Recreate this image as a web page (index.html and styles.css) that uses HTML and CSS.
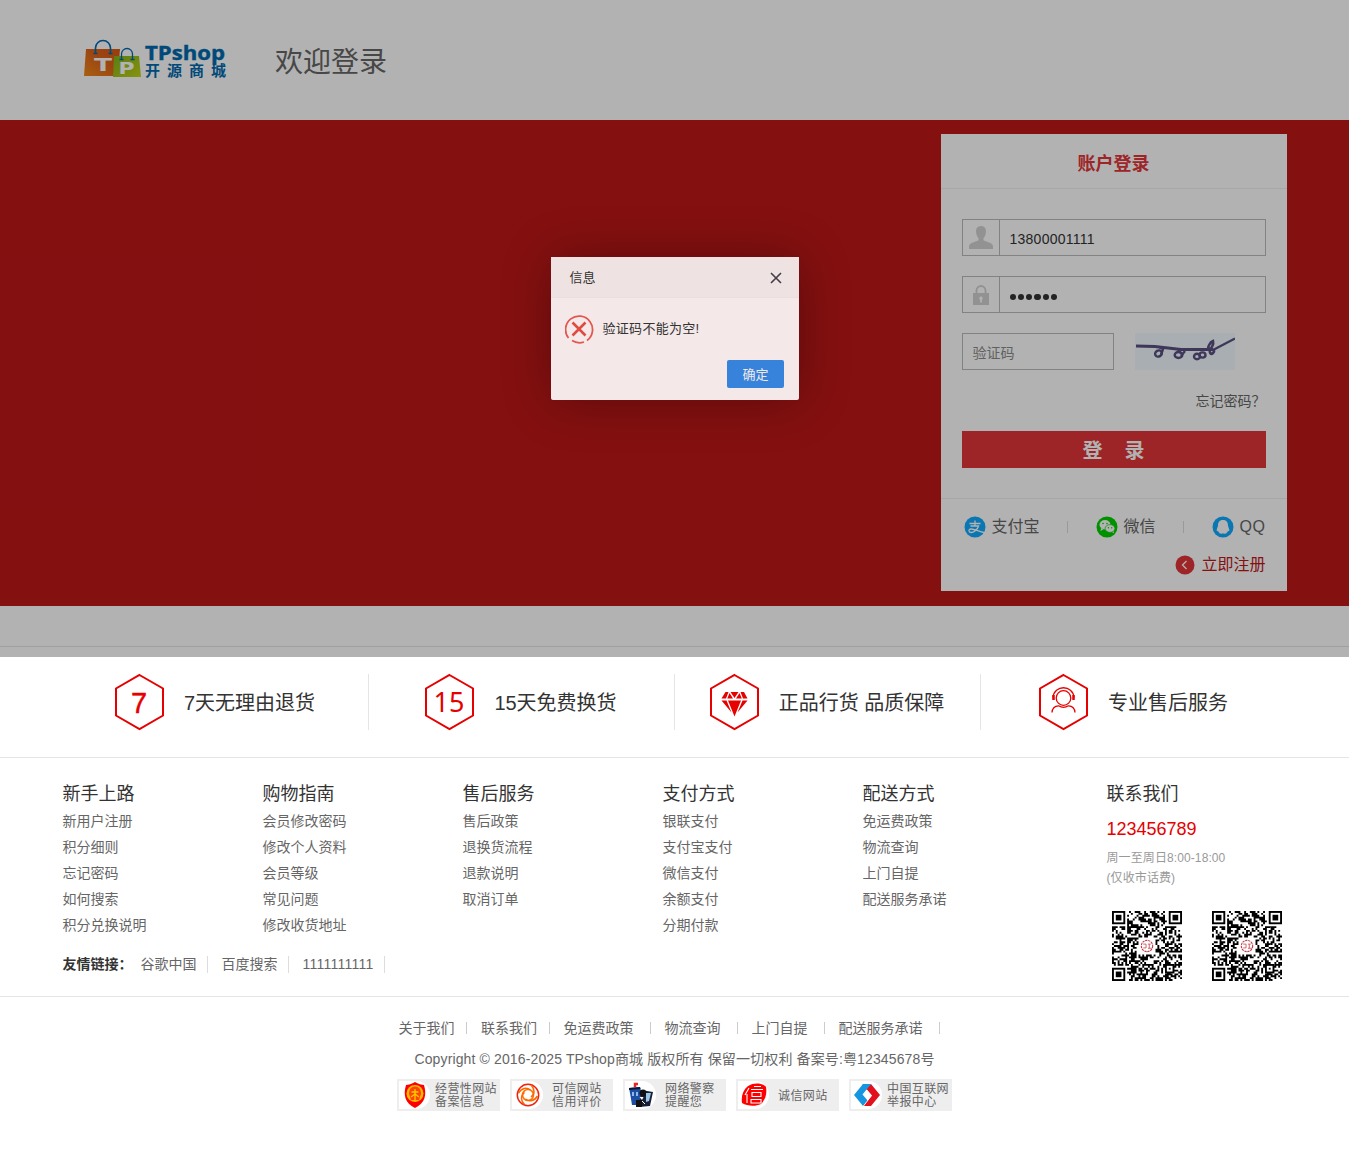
FILE: index.html
```html
<!DOCTYPE html>
<html lang="zh-CN">
<head>
<meta charset="utf-8">
<title>TPshop 登录</title>
<link rel="stylesheet" href="styles.css">
</head>
<body>
<header class="header wrap">
  <svg class="logo" width="144" height="42" viewBox="0 0 144 42">
    <defs>
      <linearGradient id="bagA" x1="1" y1="0" x2="0" y2="1"><stop offset="0" stop-color="#d85a12"/><stop offset=".45" stop-color="#e0641a"/><stop offset="1" stop-color="#f08a18"/></linearGradient>
      <linearGradient id="bagB" x1="0" y1="0" x2="1" y2="1"><stop offset="0" stop-color="#7fb51c"/><stop offset="1" stop-color="#c4d215"/></linearGradient>
    </defs>
    <path d="M2 10H36L34 37H0Z" fill="url(#bagA)"/>
    <path d="M30 17H55L57 38H29Z" fill="url(#bagB)"/>
    <path d="M11.500 14V9a7.500 7.500 0 0 1 15 0v5M9.500 14.500h4M24.500 14.500h4" fill="none" stroke="#0069ae" stroke-width="1.600"/>
    <path d="M37.500 20v-5a5.500 5.500 0 0 1 11 0v5M35.500 20.500h4M46.500 20.500h4" fill="none" stroke="#0069ae" stroke-width="1.300"/>
    <text x="10" y="32" class="logo-letter" font-size="17" textLength="18" lengthAdjust="spacingAndGlyphs">T</text>
    <text x="34.500" y="35" class="logo-letter" font-size="16" textLength="16" lengthAdjust="spacingAndGlyphs">P</text>
    <text x="61" y="21" class="logo-en" textLength="80" lengthAdjust="spacingAndGlyphs">TPshop</text>
    <text x="61" y="37" class="logo-cn" textLength="81">开源商城</text>
  </svg>
  <h1 class="welcome">欢迎登录</h1>
</header>

<main class="banner">
  <div class="wrap banner-in">
    <form class="login">
      <h2 class="login-title">账户登录</h2>
      <div class="login-body">
        <div class="field">
          <span class="field-icon"><svg width="24" height="23" viewBox="0 0 24 23"><path fill="#d2d2d2" d="M12 0c4 0 5.500 3 4.800 7-.2 2.500-1.300 4-2.300 5v2.200c2 1.600 9.500 2 9.500 6.300V23H0v-2.500c0-4.300 7.500-4.700 9.500-6.300V12c-1-1-2.100-2.500-2.300-5C6.500 3 8 0 12 0Z"/></svg></span>
          <span class="field-value">13800001111</span>
        </div>
        <div class="field">
          <span class="field-icon"><svg width="16" height="20" viewBox="0 0 16 20"><path d="M3.500 9V5.500a4.500 4.500 0 0 1 9 0V9" fill="none" stroke="#d2d2d2" stroke-width="1.800"/><path fill="#d2d2d2" d="M0 8h16v12H0z"/><path fill="#fff" d="M8 11.500a1.800 1.800 0 0 1 .9 3.300V17.500H7.100v-2.700A1.800 1.800 0 0 1 8 11.500Z"/></svg></span>
          <span class="field-value dots"><i></i><i></i><i></i><i></i><i></i><i></i></span>
        </div>
        <div class="captcha-row">
          <div class="field captcha"><span class="placeholder">验证码</span></div>
          <svg class="captcha-img" width="100" height="37" viewBox="0 0 100 37">
            <path fill="#f1faff" d="M0 0h100v37H0z"/>
            <g fill="none" stroke="#595080">
              <path stroke-width="2.800" d="M1 13 20 13.500 46 16.500H78"/>
              <path stroke-width="2.300" d="M78 17 100 5.500"/>
              <ellipse stroke-width="2.400" cx="23.500" cy="20.500" rx="3.500" ry="3" transform="rotate(-30 23.500 20.500)"/>
              <path stroke-width="2.400" d="M24 14l4 2-2 6"/>
              <ellipse stroke-width="2.400" cx="43.500" cy="22" rx="3.800" ry="3"/>
              <path stroke-width="2.400" d="M43 17l5 5M50 18l-4 5"/>
              <ellipse stroke-width="2.400" cx="62" cy="23.500" rx="3" ry="2.800"/><ellipse stroke-width="2.400" cx="67.500" cy="22" rx="3" ry="2.600"/>
              <path stroke-width="2.600" d="M78 8c-3 1-6 7-4 8s5-5 4-8ZM75 17c-1 3 1 5 3 3s1-4-3-3"/>
            </g>
          </svg>
        </div>
        <a class="forgot">忘记密码？</a>
        <button type="button" class="submit">登&nbsp;&nbsp;&nbsp;&nbsp;录</button>
      </div>
      <div class="login-foot">
        <div class="social">
          <a class="social-item"><svg width="22" height="22" viewBox="0 0 22 22"><circle cx="11" cy="11" r="10.500" fill="#11abff"/><path d="M5.500 7.500h11M11 4.500v6M6.500 10h8c-1 4-5 6.500-7.500 6.500s-3-3.300 0-3.500 8 2.500 13 3.500" fill="none" stroke="#fff" stroke-width="1.300"/></svg>支付宝</a>
          <i class="bar"></i>
          <a class="social-item"><svg width="22" height="22" viewBox="0 0 22 22"><circle cx="11" cy="11" r="10.500" fill="#00d000"/><ellipse cx="9" cy="8.800" rx="5.500" ry="4.700" fill="#fff"/><path fill="#fff" d="m5 12-.5 3 3-1.800zM17 14l1.200 3.200-3.500-1.700z"/><ellipse cx="14" cy="12.500" rx="4.900" ry="3.900" fill="#fff" stroke="#00d000" stroke-width=".7"/><g fill="#00d000"><circle cx="7" cy="7.500" r=".8"/><circle cx="11" cy="7.500" r=".8"/><circle cx="12.400" cy="11.700" r=".7"/><circle cx="15.700" cy="11.700" r=".7"/></g></svg>微信</a>
          <i class="bar"></i>
          <a class="social-item qq"><svg width="22" height="22" viewBox="0 0 22 22"><circle cx="11" cy="11" r="10.500" fill="#11abff"/><path fill="#fff" d="M11 4c3.800 0 5 2.500 5 5.500 0 1.300 1.300 3 1.300 4.700 0 1.300-.7 1.300-1.300.6-.3 1-.7 1.400-1.300 1.800.6.900-.7 1.200-3.700 1-3 .2-4.300-.1-3.700-1-.6-.4-1-.8-1.300-1.800-.6.700-1.300.7-1.300-.6 0-1.700 1.300-3.400 1.300-4.700 0-3 1.200-5.500 5-5.500Z"/></svg>QQ</a>
        </div>
        <a class="register"><svg width="20" height="20" viewBox="0 0 20 20"><circle cx="10" cy="10" r="9.500" fill="#e33538"/><path d="m11.500 6-4 4 4 4" fill="none" stroke="#fff" stroke-width="1.300"/></svg>立即注册</a>
      </div>
    </form>
  </div>
</main>

<section class="services">
  <div class="wrap services-in">
    <div class="service"><svg class="hex" width="50" height="58" viewBox="0 0 50 58"><path d="M24.500 2 48 15.500v27L24.500 56 1 42.500v-27Z"/><text x="24" y="40" class="hex-num">7</text></svg><span>7天无理由退货</span></div>
    <div class="service"><svg class="hex" width="50" height="58" viewBox="0 0 50 58"><path d="M24.500 2 48 15.500v27L24.500 56 1 42.500v-27Z"/><text x="24" y="39" class="hex-num noto">15</text></svg><span>15天免费换货</span></div>
    <div class="service"><svg class="hex" width="50" height="58" viewBox="0 0 50 58"><path d="M24.500 2 48 15.500v27L24.500 56 1 42.500v-27Z"/><path class="solid" d="M15.500 19h3L16 25.500h-4.500zM20.500 19h8l-4 6zM30.500 19H34l3.500 6.500H33zM19.500 20l3.500 5.500H17.300zM29.500 20l2.300 5.500H26zM11.500 27.500h5l5 12zM18 27.500h13L24.500 43.500zM32.500 27.500h5l-10 12z"/></svg><span>正品行货 品质保障</span></div>
    <div class="service"><svg class="hex" width="50" height="58" viewBox="0 0 50 58"><path d="M24.500 2 48 15.500v27L24.500 56 1 42.500v-27Z"/><g class="thin"><circle cx="24.500" cy="25" r="7.300"/><path d="M14 24.500c1-13 20-13 21 0M13 39.500c.3-5 3-6.500 6.500-6.700 3.500 2.200 6.500 2.200 10 0 3.500.2 6.200 1.700 6.500 6.700"/><path stroke-width="2.500" d="M14.500 22v5M34.500 22v5"/></g></svg><span>专业售后服务</span></div>
  </div>
</section>

<section class="help">
  <div class="wrap help-in">
    <div class="help-main">
      <div class="help-cols">
        <dl><dt>新手上路</dt><dd>新用户注册</dd><dd>积分细则</dd><dd>忘记密码</dd><dd>如何搜索</dd><dd>积分兑换说明</dd></dl>
        <dl><dt>购物指南</dt><dd>会员修改密码</dd><dd>修改个人资料</dd><dd>会员等级</dd><dd>常见问题</dd><dd>修改收货地址</dd></dl>
        <dl><dt>售后服务</dt><dd>售后政策</dd><dd>退换货流程</dd><dd>退款说明</dd><dd>取消订单</dd></dl>
        <dl><dt>支付方式</dt><dd>银联支付</dd><dd>支付宝支付</dd><dd>微信支付</dd><dd>余额支付</dd><dd>分期付款</dd></dl>
        <dl><dt>配送方式</dt><dd>免运费政策</dd><dd>物流查询</dd><dd>上门自提</dd><dd>配送服务承诺</dd></dl>
      </div>
      <div class="friends"><b>友情链接：</b><a>谷歌中国</a><a>百度搜索</a><a class="digits">1111111111</a></div>
    </div>
    <div class="contact">
      <h3>联系我们</h3>
      <p class="tel">123456789</p>
      <p class="hours">周一至周日8:00-18:00</p>
      <p class="hours">(仅收市话费)</p>
      <div class="codes"><svg class="qr" width="70" height="70" viewBox="0 0 37 37"></svg><svg class="qr" width="70" height="70" viewBox="0 0 37 37"></svg></div>
    </div>
  </div>
</section>

<footer class="footer">
  <nav class="foot-nav"><a>关于我们</a><a>联系我们</a><a class="wide">免运费政策</a><a class="wide">物流查询</a><a class="wide">上门自提</a><a class="wide">配送服务承诺</a></nav>
  <p class="copy">Copyright © 2016-2025 TPshop商城 版权所有 保留一切权利 备案号:粤12345678号</p>
  <div class="badges">
    <div class="badge"><span class="badge-pic"><svg width="24" height="28" viewBox="0 0 24 28"><path d="M12 1c3 2 7 3 9 3 3 10 1 18-9 23C2 22 0 14 3 4c2 0 6-1 9-3Z" fill="#f00"/><circle cx="12" cy="12.500" r="8.500" fill="#fb0"/><path d="M12 5.500c4 0 6 3 6 7.500l-2 6H8l-2-6c0-4.500 2-7.500 6-7.500Z" fill="#f40"/><path d="M12 8v11M8.500 11h7M8 16l4-3 4 3" stroke="#fc0" stroke-width="1.300" fill="none"/></svg></span><span class="badge-text">经营性网站<br>备案信息</span></div>
    <div class="badge"><span class="badge-pic"><svg width="24" height="24" viewBox="0 0 24 24" fill="none"><circle cx="12" cy="12" r="10.700" stroke="#e21" stroke-width="1.500"/><circle cx="12" cy="12" r="5.500" stroke="#f70" stroke-width="1.600"/><path d="M2.500 10c3-5 8-6 12-3M15 2c4 4 4 9 0 12M21.500 13c-3 5-8 6-12 3M8.500 21.500c-4-4-4-9 0-12" stroke="#f60" stroke-width="1.500"/></svg></span><span class="badge-text">可信网站<br>信用评价</span></div>
    <div class="badge"><span class="badge-pic"><svg width="26" height="26" viewBox="0 0 26 26"><path d="M1 6 12 5l1 4-1 14H4L2 11Z" fill="#1c4fa3"/><path d="M1 6l11-1 .5 2L1 8Z" fill="#0a1838"/><path d="M4 10h2v4H4zM8 10h2v4H8z" fill="#8db8e8"/><path d="M7 5V2h3" stroke="#e22" stroke-width="2.500" fill="none"/><path d="M13 8 25 10l-3 14-11 1Z" fill="#182038"/><circle cx="15" cy="11" r="3.500" fill="#111"/><path d="m18 11 5 0-2 8-3 1z" fill="#9cc4e8"/><path d="m11.500 15 4 0-1.500 3z" fill="#fff"/><path d="M8 18h6v7H8z" fill="#111"/><path d="m14 19 3 3" stroke="#fff"/></svg></span><span class="badge-text">网络警察<br>提醒您</span></div>
    <div class="badge"><span class="badge-pic"><svg width="26" height="24" viewBox="0 0 26 24"><path d="M7 3C13-1 22 0 25 4c1 6 0 12-5 17-6 3-14 2-19-1C0 13 2 7 7 3Z" fill="#f00"/><path d="M8 5 4 12M6 11v9M13 3.500h7M10 6.500h12M11 9.500h9v4h-9zM10 16.500h10v3.500H10z" stroke="#fff" stroke-width="1.100" fill="none"/></svg></span><span class="badge-text">诚信网站</span></div>
    <div class="badge"><span class="badge-pic"><svg width="26" height="22" viewBox="0 0 26 22"><path d="M9 0h8L8.500 10.500 14 17l-5 5L0 11Z" fill="#1696e0"/><path d="M17 22H9.500L18 11.500 12.500 5 17 0l9 11Z" fill="#e20f1c"/><path d="M9 0h8L12 6 8 2Z" fill="#1696e0"/><path d="M17.500 11.500 9.500 22" stroke="#fff" stroke-width=".8"/></svg></span><span class="badge-text">中国互联网<br>举报中心</span></div>
  </div>
</footer>

<div class="shade"></div>
<div class="dialog">
  <div class="dialog-title"><span>信息</span><svg width="12" height="12" viewBox="0 0 12 12"><path d="m1 1 10 10M11 1 1 11" stroke="#453c47" stroke-width="1.600"/></svg></div>
  <div class="dialog-body"><svg width="30" height="30" viewBox="0 0 30 30" fill="none"><path d="M3.500 24A13.500 13.500 0 1 1 22 26.500M19 28a14 14 0 0 1-12-1.500" stroke="#e2584f" stroke-width="1.800"/><path d="m7.500 8.500 13 13M20.500 8.500l-13 13" stroke="#e04b40" stroke-width="2.600"/></svg><span>验证码不能为空!</span></div>
  <div class="dialog-foot"><button type="button" class="ok">确定</button></div>
</div>
<script src="qr.js"></script>
</body>
</html>
```
FILE: styles.css
```css
* { box-sizing: border-box; margin: 0; padding: 0; }
body {
  position: relative;
  height: 1157px;
  background: #fff;
  color: #333;
  font: 14px/20px "Liberation Sans", "Noto Sans CJK SC", sans-serif;
}
i { font-style: normal; }
svg { display: block; flex: none; }
button { border: 0; font-family: inherit; }
.wrap { width: 1224px; margin: 0 auto; }

.header { display: flex; height: 120px; padding: 39px 0 0 21.500px; }
.logo-letter { fill: #fff; font-family: "DejaVu Sans"; font-weight: 700; }
.logo-en { fill: #0069ae; font: 700 19px "Open Sans", sans-serif; stroke: #0069ae; stroke-width: .4; }
.logo-cn { fill: #0069ae; font: 700 15px "Noto Sans CJK SC", sans-serif; }
.welcome { margin: 4px 0 0 47px; font-size: 28px; line-height: 40px; font-weight: 400; color: #666; }

.banner { height: 486px; background: #bf1718; }
.banner-in { display: flex; justify-content: flex-end; padding-top: 14px; }
.login { width: 346px; height: 457px; background: #fff; }
.login-title { height: 55px; border-bottom: 1px solid #f0f0f0; color: #e33538; font-size: 18px; line-height: 60px; text-align: center; }
.login-body { display: flex; flex-direction: column; height: 309px; padding: 30px 21px 0; }
.field { display: flex; height: 37px; margin-bottom: 20px; border: 1px solid #bbb; }
.field-icon { display: flex; align-items: center; justify-content: center; width: 37px; border-right: 1px solid #bbb; }
.field-value { padding-left: 10px; line-height: 38px; color: #333; font-size: 14px; letter-spacing: .25px; }
.dots { display: flex; align-items: center; gap: 2px; padding-top: 5px; }
.dots i { width: 6.300px; height: 6.300px; border-radius: 50%; background: #333; }
.captcha-row { display: flex; gap: 21px; }
.captcha { width: 152px; }
.placeholder { padding-left: 10px; line-height: 38px; color: #8c8c8c; }
.forgot { align-self: flex-end; height: 20px; line-height: 22px; color: #666; }
.submit { height: 37px; margin-top: 21px; background: #e33538; color: #fff; font-size: 20px; line-height: 40px; font-weight: 700; }
.login-foot { border-top: 1px solid #f0f0f0; padding: 17px 21px 0; color: #666; font-size: 16px; line-height: 22px; }
.social { display: flex; align-items: center; justify-content: space-between; height: 22px; padding-left: 2px; }
.social-item, .register { display: flex; align-items: center; gap: 6px; }
.qq { letter-spacing: .5px; }
.bar { width: 1px; height: 12px; background: #ddd; }
.register { justify-content: flex-end; margin-top: 16px; color: #bf1718; }

.services { margin-top: 40px; height: 112px; border-top: 1px solid #e5e5e5; border-bottom: 1px solid #e5e5e5; padding-top: 27px; }
.services-in { display: flex; }
.service { display: flex; align-items: center; justify-content: center; gap: 19px; width: 306px; height: 56px; border-right: 1px solid #e5e5e5; font-size: 20px; }
.service span { padding-top: 1px; }
.service:last-child { border: 0; }
.hex { fill: none; stroke: #e60000; stroke-width: 2; }
.hex .solid { fill: #e60000; stroke: none; }
.hex .thin { stroke-width: 1.300; }
.hex-num { fill: #e60000; stroke: #e60000; stroke-width: .4; font: 29px "Liberation Sans", sans-serif; text-anchor: middle; }
.hex-num.noto { font: 27px "Noto Sans", sans-serif; stroke: none; }

.help { height: 239px; border-bottom: 1px solid #e5e5e5; }
.help-in { display: flex; justify-content: space-between; padding-top: 22px; }
.help-cols { display: flex; height: 158px; }
.help-cols dl { width: 200px; }
dt, h3 { height: 28px; font-size: 18px; line-height: 28px; font-weight: 400; }
dd { height: 26px; line-height: 26px; color: #666; }
.friends { display: flex; align-items: center; height: 16px; margin-top: 18px; color: #666; }
.friends b { width: 78px; color: #333; font-size: 14px; line-height: 18px; white-space: nowrap; }
.friends a { padding-right: 10px; margin-right: 14px; border-right: 1px solid #ddd; line-height: 17px; }
.friends .digits { letter-spacing: .25px; }
.contact { width: 180px; }
.tel { margin-top: 10px; font-size: 18px; line-height: 22px; color: #e60000; }
.hours { font-size: 12px; line-height: 20px; color: #999; letter-spacing: .1px; }
.tel + .hours { margin-top: 8px; }
.codes { display: flex; gap: 30px; margin: 23px 0 0 5px; }

.footer { display: flex; flex-direction: column; align-items: center; padding-top: 21px; color: #666; }
.foot-nav { display: flex; height: 20px; }
.foot-nav a { display: flex; align-items: center; margin-right: 14px; }
.foot-nav a::after { content: ""; width: 1px; height: 12px; margin-left: 11.500px; background: #ccc; }
.foot-nav .wide::after { margin-left: 16px; }
.foot-nav a:last-child { margin-right: 11px; }
.copy { margin-top: 11px; line-height: 20px; white-space: nowrap; letter-spacing: .13px; }
.badges { display: flex; gap: 10px; margin-top: 10px; }
.badge { display: flex; align-items: center; width: 103px; height: 32px; background: #eee; }
.badge-pic { display: flex; align-items: center; justify-content: center; flex: none; width: 31px; height: 28px; margin: 0 1px 0 2px; border-radius: 0 14px 14px 0; background: #fff; }
.badge-text { flex: 1; padding: 2px 0 0 4px; font-size: 12px; line-height: 13px; letter-spacing: .4px; white-space: nowrap; }
.badge:nth-child(2) .badge-text, .badge:nth-child(3) .badge-text, .badge:nth-child(4) .badge-text { padding-left: 8px; }

.shade { position: absolute; top: 0; left: 0; width: 100%; height: 657px; background: rgba(0, 0, 0, .3); }
.dialog { position: absolute; top: 257px; left: 551px; width: 248px; height: 143px; border-radius: 2px; background: #f4e9e8; box-shadow: 1px 1px 50px rgba(0, 0, 0, .3); }
.dialog-title { display: flex; align-items: center; justify-content: space-between; height: 41px; padding: 1px 17px 0 18.500px; border-bottom: 1px solid #eadfde; background: #eee3e2; font-size: 13px; }
.dialog-body { display: flex; align-items: center; gap: 8px; height: 60px; padding: 2px 0 0 13.500px; font-size: 13px; letter-spacing: .3px; }
.dialog-foot { display: flex; justify-content: flex-end; padding: 2px 15px 0 0; }
.ok { width: 57px; height: 28px; border-radius: 2px; background: #3783dc; color: #f4e9e8; font-size: 13px; line-height: 29px; }
```
FILE: qr.js
```js
// Draws the follow-us codes: modules, three finder squares, one alignment square, centre seal.
(function () {
  var N = 37, d = '', s = 20257;
  function rnd() { s = (s * 48271) % 2147483647; return s / 2147483647; }
  function sq(x, y, w, c) { return '<path fill="' + c + '" d="M' + x + ' ' + y + 'h' + w + 'v' + w + 'h-' + w + 'z"/>'; }
  for (var y = 0; y < N; y++) {
    for (var x = 0; x < N; x++) {
      var finder = (x < 8 && y < 8) || (x > 28 && y < 8) || (x < 8 && y > 28);
      var seal = x > 13 && x < 23 && y > 13 && y < 23;
      if (rnd() < 0.52 && !finder && !seal) d += 'M' + x + ' ' + y + 'h1v1h-1z';
    }
  }
  var out = '<path d="' + d + '"/>';
  [[0, 0], [30, 0], [0, 30]].forEach(function (p) {
    out += sq(p[0], p[1], 7, '#000') + sq(p[0] + 1, p[1] + 1, 5, '#fff') + sq(p[0] + 2, p[1] + 2, 3, '#000');
  });
  out += sq(28, 28, 5, '#000') + sq(29, 29, 3, '#fff') + sq(30, 30, 1, '#000');
  out += '<circle cx="18.500" cy="18.500" r="3" fill="none" stroke="#c23a48" stroke-width=".6" stroke-dasharray="1.200 .4"/><path d="M16.500 17.500h1.500v2h-1.500M19 17.500h1.500M19.700 17.500v2.200M19 19.700h2" fill="none" stroke="#c23a48" stroke-width=".4"/>';
  document.querySelectorAll('.qr').forEach(function (el) { el.innerHTML = out; });
})();
```
